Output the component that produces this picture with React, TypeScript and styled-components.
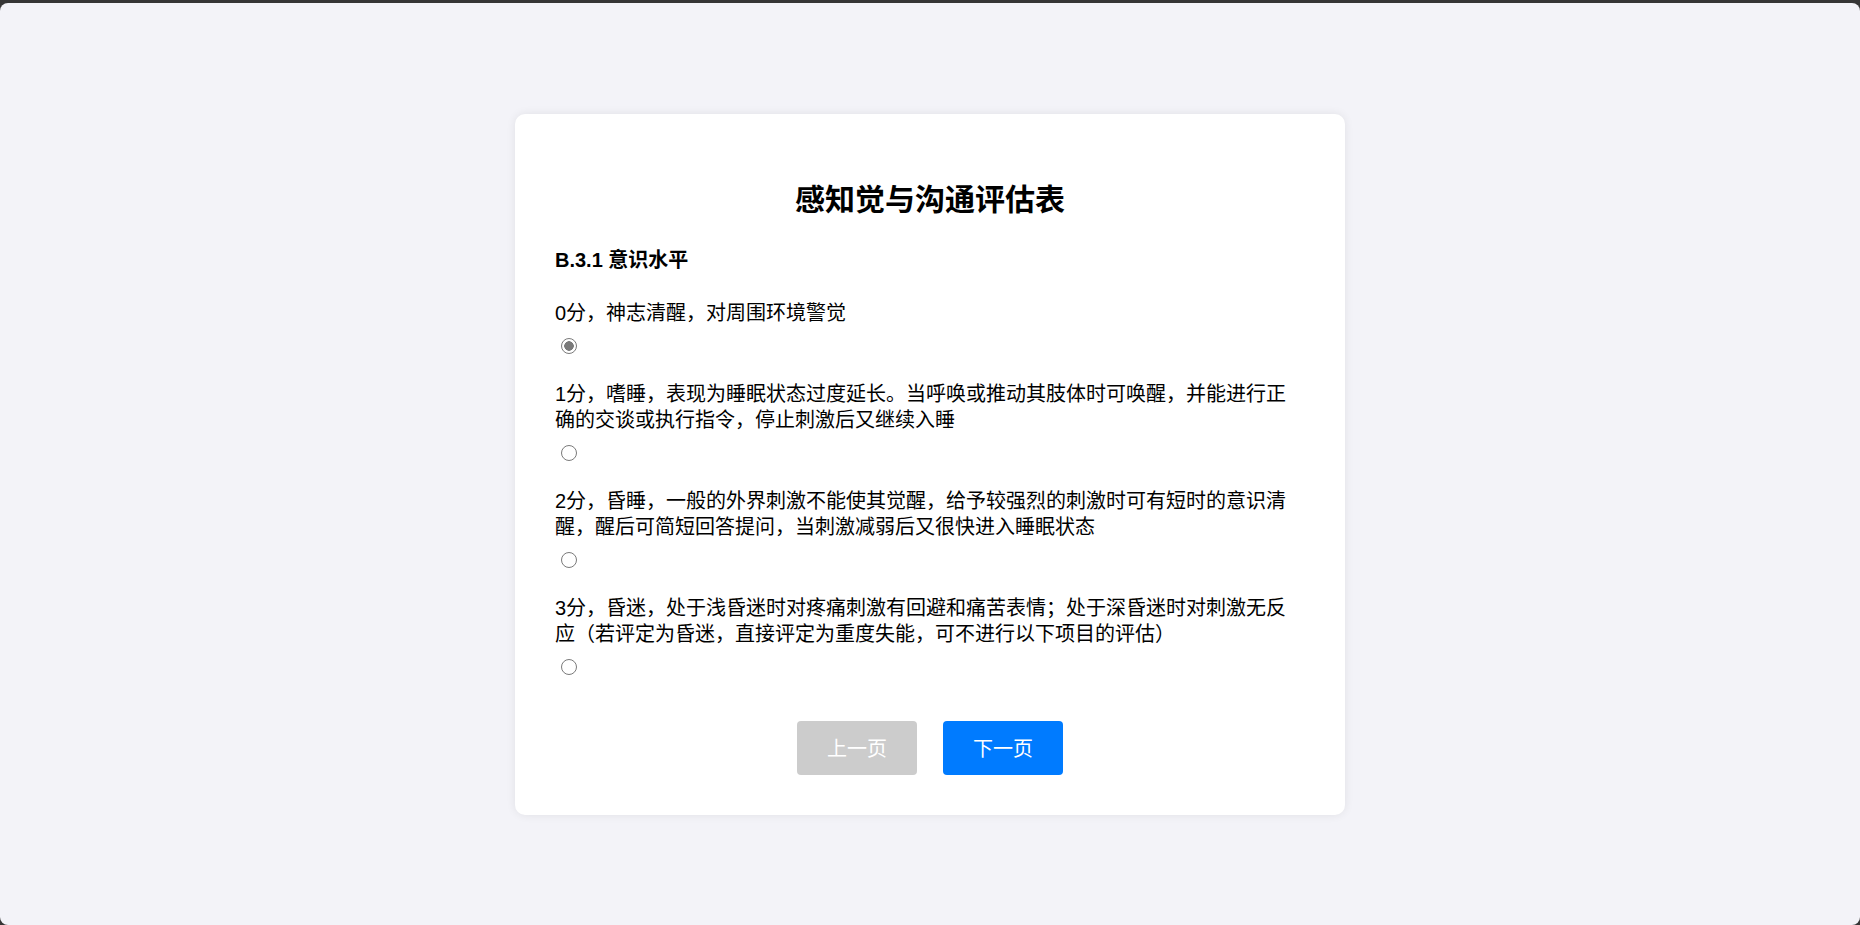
import * as React from 'react';
import styled, { createGlobalStyle } from 'styled-components';

const GlobalStyle = createGlobalStyle`
  html, body {
    margin: 0;
    padding: 0;
    background: #363636;
  }
  body {
    font-family: "Liberation Sans", "Noto Sans CJK SC", sans-serif;
    color: #000;
  }
`;

const Frame = styled.div`
  margin-top: 3px;
  height: 922px;
  background: #f3f3f8;
  border-radius: 8px;
  display: flex;
  align-items: center;
  justify-content: center;
`;

const Card = styled.div`
  width: 750px;
  padding: 40px;
  background: #fff;
  border-radius: 10px;
  box-shadow: 0 0 10px rgba(0, 0, 0, 0.08);
`;

const Title = styled.h1`
  margin: 28px 0 29px;
  font-size: 30px;
  line-height: 36px;
  font-weight: 700;
  text-align: center;
`;

const Section = styled.div`
  font-size: 20px;
  line-height: 26px;
  font-weight: 700;
  margin-bottom: 27px;
`;

const Option = styled.label`
  display: block;
  margin-bottom: 27px;

  &:last-of-type {
    margin-bottom: 46px;
  }
`;

const OptionText = styled.div`
  font-size: 20px;
  line-height: 26px;
`;

const Radio = styled.input`
  appearance: none;
  display: block;
  box-sizing: border-box;
  width: 16px;
  height: 16px;
  margin: 12px 0 0 6px;
  border: 1px solid #7a7a7a;
  border-radius: 50%;
  background: #fff;
  cursor: pointer;

  &:checked {
    background: radial-gradient(circle, #7a7a7a 0 4.5px, #fff 5px);
  }
`;

const Buttons = styled.div`
  display: flex;
  justify-content: center;
  gap: 26px;
`;

const Button = styled.button<{ $primary?: boolean }>`
  width: 120px;
  height: 54px;
  border: none;
  border-radius: 4px;
  font-family: inherit;
  font-size: 20px;
  color: #fff;
  background: ${props => (props.$primary ? '#007bff' : '#cccccc')};
  cursor: ${props => (props.$primary ? 'pointer' : 'default')};
`;

const options = [
  '0分，神志清醒，对周围环境警觉',
  '1分，嗜睡，表现为睡眠状态过度延长。当呼唤或推动其肢体时可唤醒，并能进行正确的交谈或执行指令，停止刺激后又继续入睡',
  '2分，昏睡，一般的外界刺激不能使其觉醒，给予较强烈的刺激时可有短时的意识清醒，醒后可简短回答提问，当刺激减弱后又很快进入睡眠状态',
  '3分，昏迷，处于浅昏迷时对疼痛刺激有回避和痛苦表情；处于深昏迷时对刺激无反应（若评定为昏迷，直接评定为重度失能，可不进行以下项目的评估）',
];

export default function App() {
  const [value, setValue] = React.useState(0);

  return (
    <>
      <GlobalStyle />
      <Frame>
        <Card>
          <Title>感知觉与沟通评估表</Title>
          <Section>B.3.1 意识水平</Section>
          {options.map((text, i) => (
            <Option key={i}>
              <OptionText>{text}</OptionText>
              <Radio
                type="radio"
                name="consciousness"
                checked={value === i}
                onChange={() => setValue(i)}
              />
            </Option>
          ))}
          <Buttons>
            <Button disabled>上一页</Button>
            <Button $primary>下一页</Button>
          </Buttons>
        </Card>
      </Frame>
    </>
  );
}
